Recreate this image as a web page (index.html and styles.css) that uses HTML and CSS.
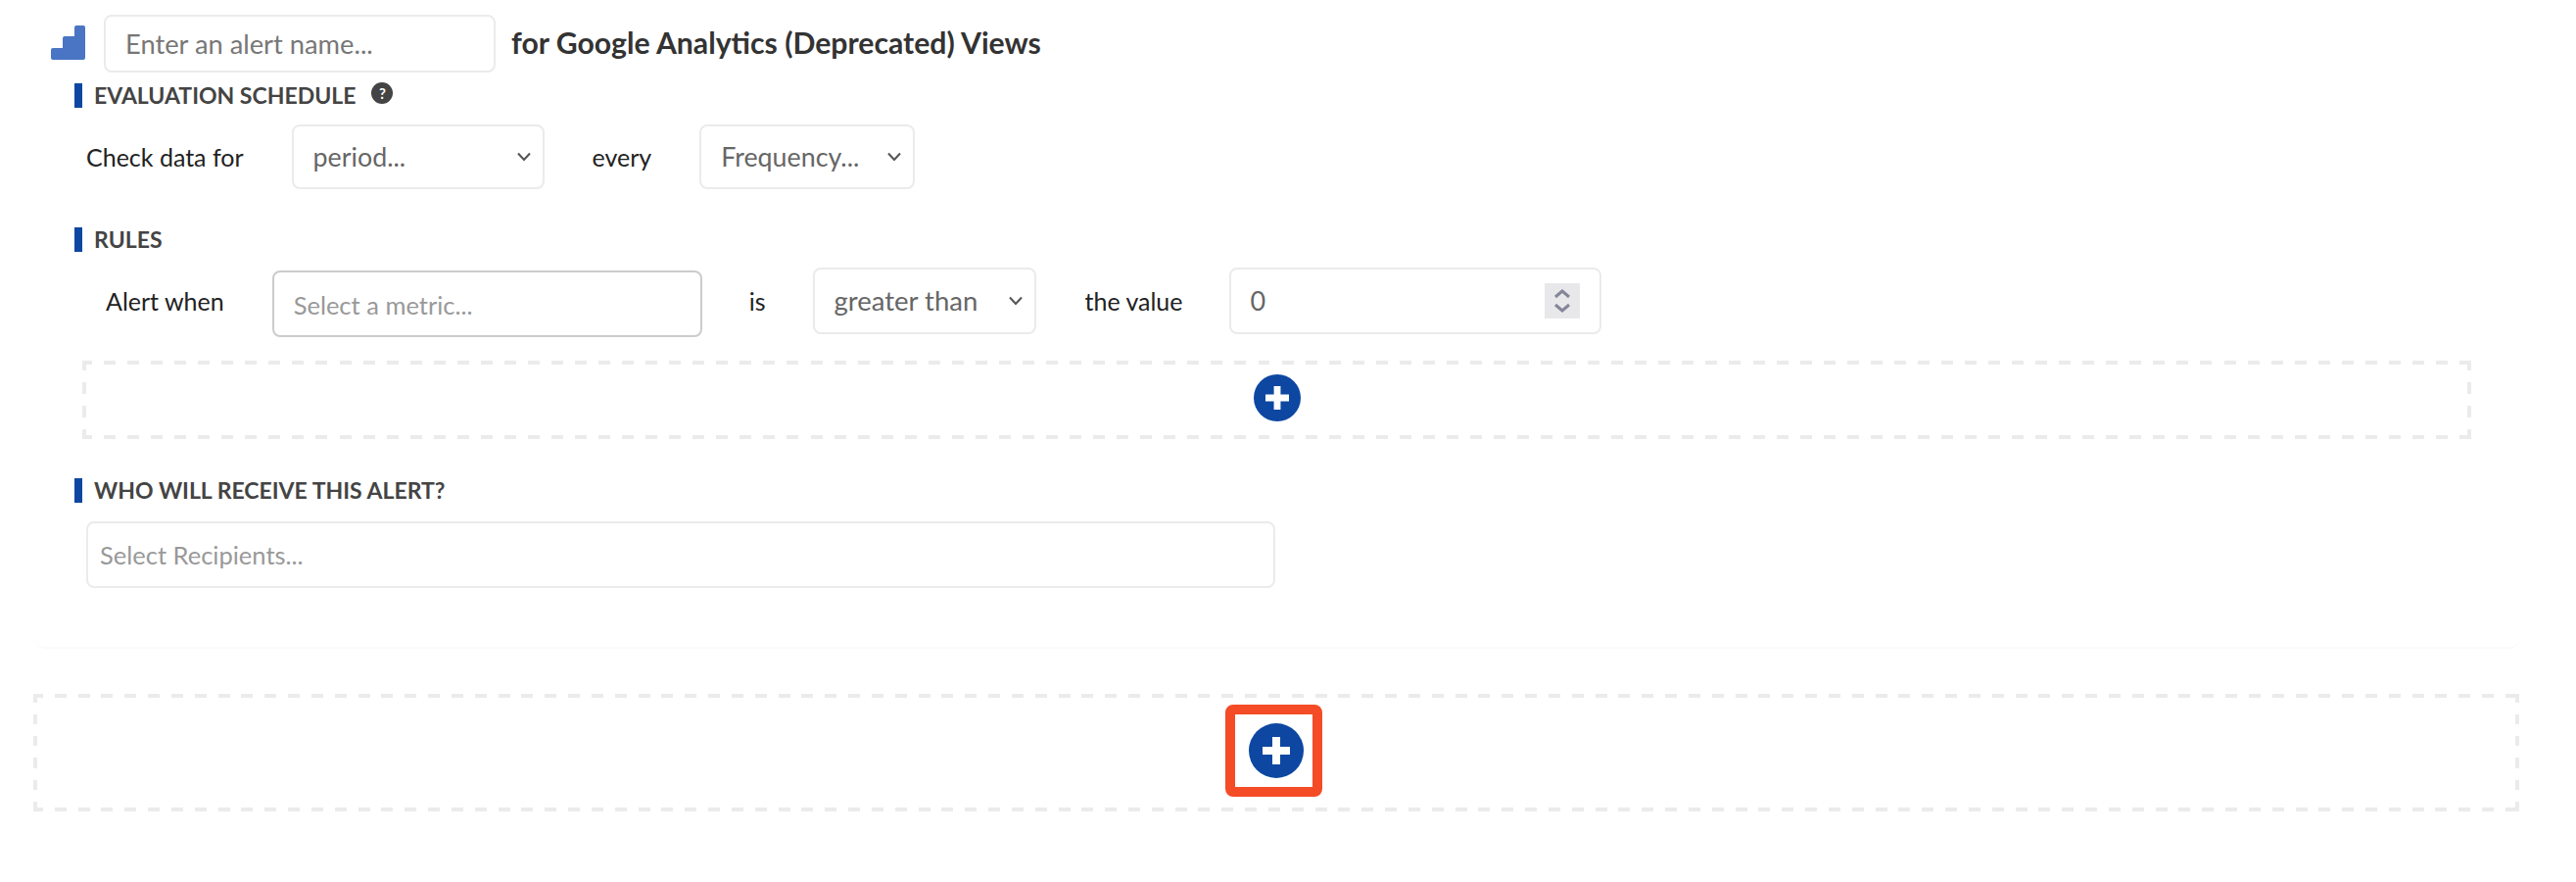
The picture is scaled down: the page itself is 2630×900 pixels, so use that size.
FILE: index.html
```html
<!DOCTYPE html>
<html lang="en">
<head>
    <meta charset="UTF-8">
    <title>Alerts</title>
    <link rel="stylesheet" href="styles.css">
</head>
<body>
    <div class="alert-card">
        <div class="name-row">
            <svg class="ga-icon" width="35" height="35" viewBox="0 0 35 35">
                <path d="M2 33V25H14V13H26V2H33V33Z" fill="#4a75c4" stroke="#4a75c4" stroke-width="4" stroke-linejoin="round"/>
            </svg>
            <input class="name-input" type="text" placeholder="Enter an alert name...">
            <span class="name-suffix">for Google Analytics (Deprecated) Views</span>
        </div>

        <div class="section">
            <div class="section-head">
                <span class="section-title">EVALUATION SCHEDULE</span>
                <span class="help">?</span>
            </div>
            <div class="schedule-row">
                <span class="lbl lbl-check">Check data for</span>
                <div class="dropdown dd-period">
                    <span>period...</span>
                    <svg width="14" height="10" viewBox="0 0 14 10"><path d="M1 1.5L7 8L13 1.5" fill="none" stroke="#555" stroke-width="2"/></svg>
                </div>
                <span class="lbl lbl-every">every</span>
                <div class="dropdown dd-freq">
                    <span>Frequency...</span>
                    <svg width="14" height="10" viewBox="0 0 14 10"><path d="M1 1.5L7 8L13 1.5" fill="none" stroke="#555" stroke-width="2"/></svg>
                </div>
            </div>
        </div>

        <div class="section section-rules">
            <div class="section-head">
                <span class="section-title">RULES</span>
            </div>
            <div class="rule-row">
                <span class="lbl lbl-alert">Alert when</span>
                <input class="metric-input" type="text" placeholder="Select a metric...">
                <span class="lbl lbl-is">is</span>
                <div class="dropdown dd-compare">
                    <span>greater than</span>
                    <svg width="14" height="10" viewBox="0 0 14 10"><path d="M1 1.5L7 8L13 1.5" fill="none" stroke="#555" stroke-width="2"/></svg>
                </div>
                <span class="lbl lbl-value">the value</span>
                <div class="number-box">
                    <span>0</span>
                    <div class="spinner">
                        <svg width="20" height="28" viewBox="0 0 20 28"><path d="M3 10L10 4L17 10M3 18L10 24L17 18" fill="none" stroke="#85859a" stroke-width="3"/></svg>
                    </div>
                </div>
            </div>
            <div class="dashed dashed-rule">
                <svg class="add-small" width="48" height="48" viewBox="0 0 56 56">
                    <circle cx="28" cy="28" r="28" fill="#0d47a1"/>
                    <path d="M24 14H32V24H42V32H32V42H24V32H14V24H24Z" fill="#fff"/>
                </svg>
            </div>
        </div>

        <div class="section section-who">
            <div class="section-head">
                <span class="section-title">WHO WILL RECEIVE THIS ALERT?</span>
            </div>
            <input class="recipients" type="text" placeholder="Select Recipients...">
        </div>
    </div>

    <div class="dashed dashed-add">
        <div class="highlight">
            <svg width="56" height="56" viewBox="0 0 56 56">
                <circle cx="28" cy="28" r="28" fill="#0d47a1"/>
                <path d="M24 14H32V24H42V32H32V42H24V32H14V24H24Z" fill="#fff"/>
            </svg>
        </div>
    </div>
</body>
</html>
```

FILE: styles.css
```css
body {
    margin: 0;
    background: #fff;
    color: #222;
    font-family: Lato, "Open Sans", sans-serif;
    font-size: 25px;
}

input {
    font-family: inherit;
    outline: none;
    background: #fff;
}

.alert-card {
    width: 2520px;
    height: 645px;
    margin-left: 36px;
    padding: 15px 0 0 16px;
    border-bottom: 2px solid #fafafa;
    border-radius: 0 0 10px 10px;
}

/* alert name */
.name-row {
    display: flex;
    align-items: center;
    height: 59px;
}

.ga-icon { margin-top: -3px; }

.name-input {
    width: 400px;
    height: 59px;
    box-sizing: border-box;
    margin-left: 19px;
    padding: 0 20px;
    border: 2px solid #ebebeb;
    border-radius: 8px;
    font-size: 27.3px;
}

.name-input::placeholder { color: #777; }

.name-suffix {
    margin: -3px 0 0 16px;
    font-size: 30.2px;
    font-weight: 700;
    color: #333;
}

/* sections */
.section { margin: 11px 0 0 24px; }
.section-rules { margin-top: 39px; }
.section-who { margin-top: 40px; }

.section-head {
    display: flex;
    align-items: flex-start;
    height: 25px;
    padding-left: 12px;
    border-left: 8px solid #0d47a1;
}

.section-title {
    font-size: 23px;
    line-height: 25px;
    font-weight: 700;
    color: #444;
}

.help {
    width: 22px;
    height: 22px;
    margin: -1px 0 0 16px;
    border-radius: 50%;
    background: #444;
    color: #fff;
    font-size: 15px;
    font-weight: 700;
    line-height: 22px;
    text-align: center;
}

.lbl { color: #222; white-space: nowrap; }

.schedule-row {
    display: flex;
    align-items: center;
    height: 66px;
    margin-top: 17px;
    padding-left: 12px;
}

.dropdown {
    display: flex;
    align-items: center;
    justify-content: space-between;
    height: 68px;
    box-sizing: border-box;
    padding: 0 12px 0 20px;
    border: 2px solid #ebebeb;
    border-radius: 8px;
    color: #666;
    font-size: 26.8px;
}

.dd-period { width: 258px; height: 66px; margin-left: 49px; }
.lbl-every { margin-left: 49px; }
.dd-freq { width: 220px; height: 66px; margin-left: 49px; }

.rule-row {
    display: flex;
    align-items: flex-start;
    height: 71px;
    margin-top: 16px;
    line-height: 68px;
}

.lbl-alert { margin-left: 32px; }

.metric-input {
    width: 439px;
    height: 68px;
    box-sizing: border-box;
    margin: 3px 0 0 49px;
    padding: 2px 20px 0;
    border: 2px solid #ccc;
    border-radius: 8px;
    font-size: 25.5px;
}

.metric-input::placeholder { color: #999; }

.lbl-is { margin-left: 48px; }
.dd-compare { width: 228px; margin-left: 48px; font-size: 27.5px; }
.lbl-value { margin-left: 50px; }

.number-box {
    display: flex;
    align-items: center;
    justify-content: space-between;
    width: 380px;
    height: 68px;
    box-sizing: border-box;
    margin-left: 47px;
    padding: 0 20px;
    border: 2px solid #ebebeb;
    border-radius: 8px;
    color: #666;
    font-size: 27px;
}

.spinner {
    display: flex;
    align-items: center;
    justify-content: center;
    width: 36px;
    height: 36px;
    background: #e8e8ea;
}

/* dashed add zones, 4 strips so the dash length matches */
.dashed {
    --c: #ebebeb;
    --vhead: 10px;
    --vtail: 2px;
    display: flex;
    align-items: center;
    justify-content: center;
    box-sizing: border-box;
    background-image:
        repeating-linear-gradient(to right, var(--c) 0 10px, transparent 10px calc(var(--px) - 2px), var(--c) calc(var(--px) - 2px) var(--px)),
        repeating-linear-gradient(to right, var(--c) 0 10px, transparent 10px calc(var(--px) - 2px), var(--c) calc(var(--px) - 2px) var(--px)),
        repeating-linear-gradient(to bottom, var(--c) 0 var(--vhead), transparent var(--vhead) calc(var(--py) - var(--vtail)), var(--c) calc(var(--py) - var(--vtail)) var(--py)),
        repeating-linear-gradient(to bottom, var(--c) 0 var(--vhead), transparent var(--vhead) calc(var(--py) - var(--vtail)), var(--c) calc(var(--py) - var(--vtail)) var(--py));
    background-repeat: no-repeat;
    background-size: 100% 4px, 100% 4px, 4px 100%, 4px 100%;
    background-position: top left, bottom left, top left, top right;
}

.dashed-rule {
    --px: 24.05px;
    --py: 24px;
    width: 2439px;
    height: 80px;
    margin: 24px 0 0 8px;
}

.add-small { margin-top: -4px; }

.recipients {
    display: block;
    width: 1214px;
    height: 68px;
    box-sizing: border-box;
    margin: 19px 0 0 12px;
    padding: 0 12px;
    border: 2px solid #ebebeb;
    border-radius: 8px;
    font-size: 25.5px;
}

.recipients::placeholder { color: #999; }

.dashed-add {
    --px: 23.83px;
    --py: 22.25px;
    --vhead: 9px;
    --vtail: 1.25px;
    width: 2538px;
    height: 120px;
    margin: 46px 0 0 34px;
}

.highlight {
    display: flex;
    align-items: center;
    justify-content: center;
    width: 99px;
    height: 94px;
    box-sizing: border-box;
    margin: -4px 0 0 -6px;
    padding-left: 5px;
    border: 10px solid #f44c26;
    border-radius: 8px;
    background: #fff;
}
```
